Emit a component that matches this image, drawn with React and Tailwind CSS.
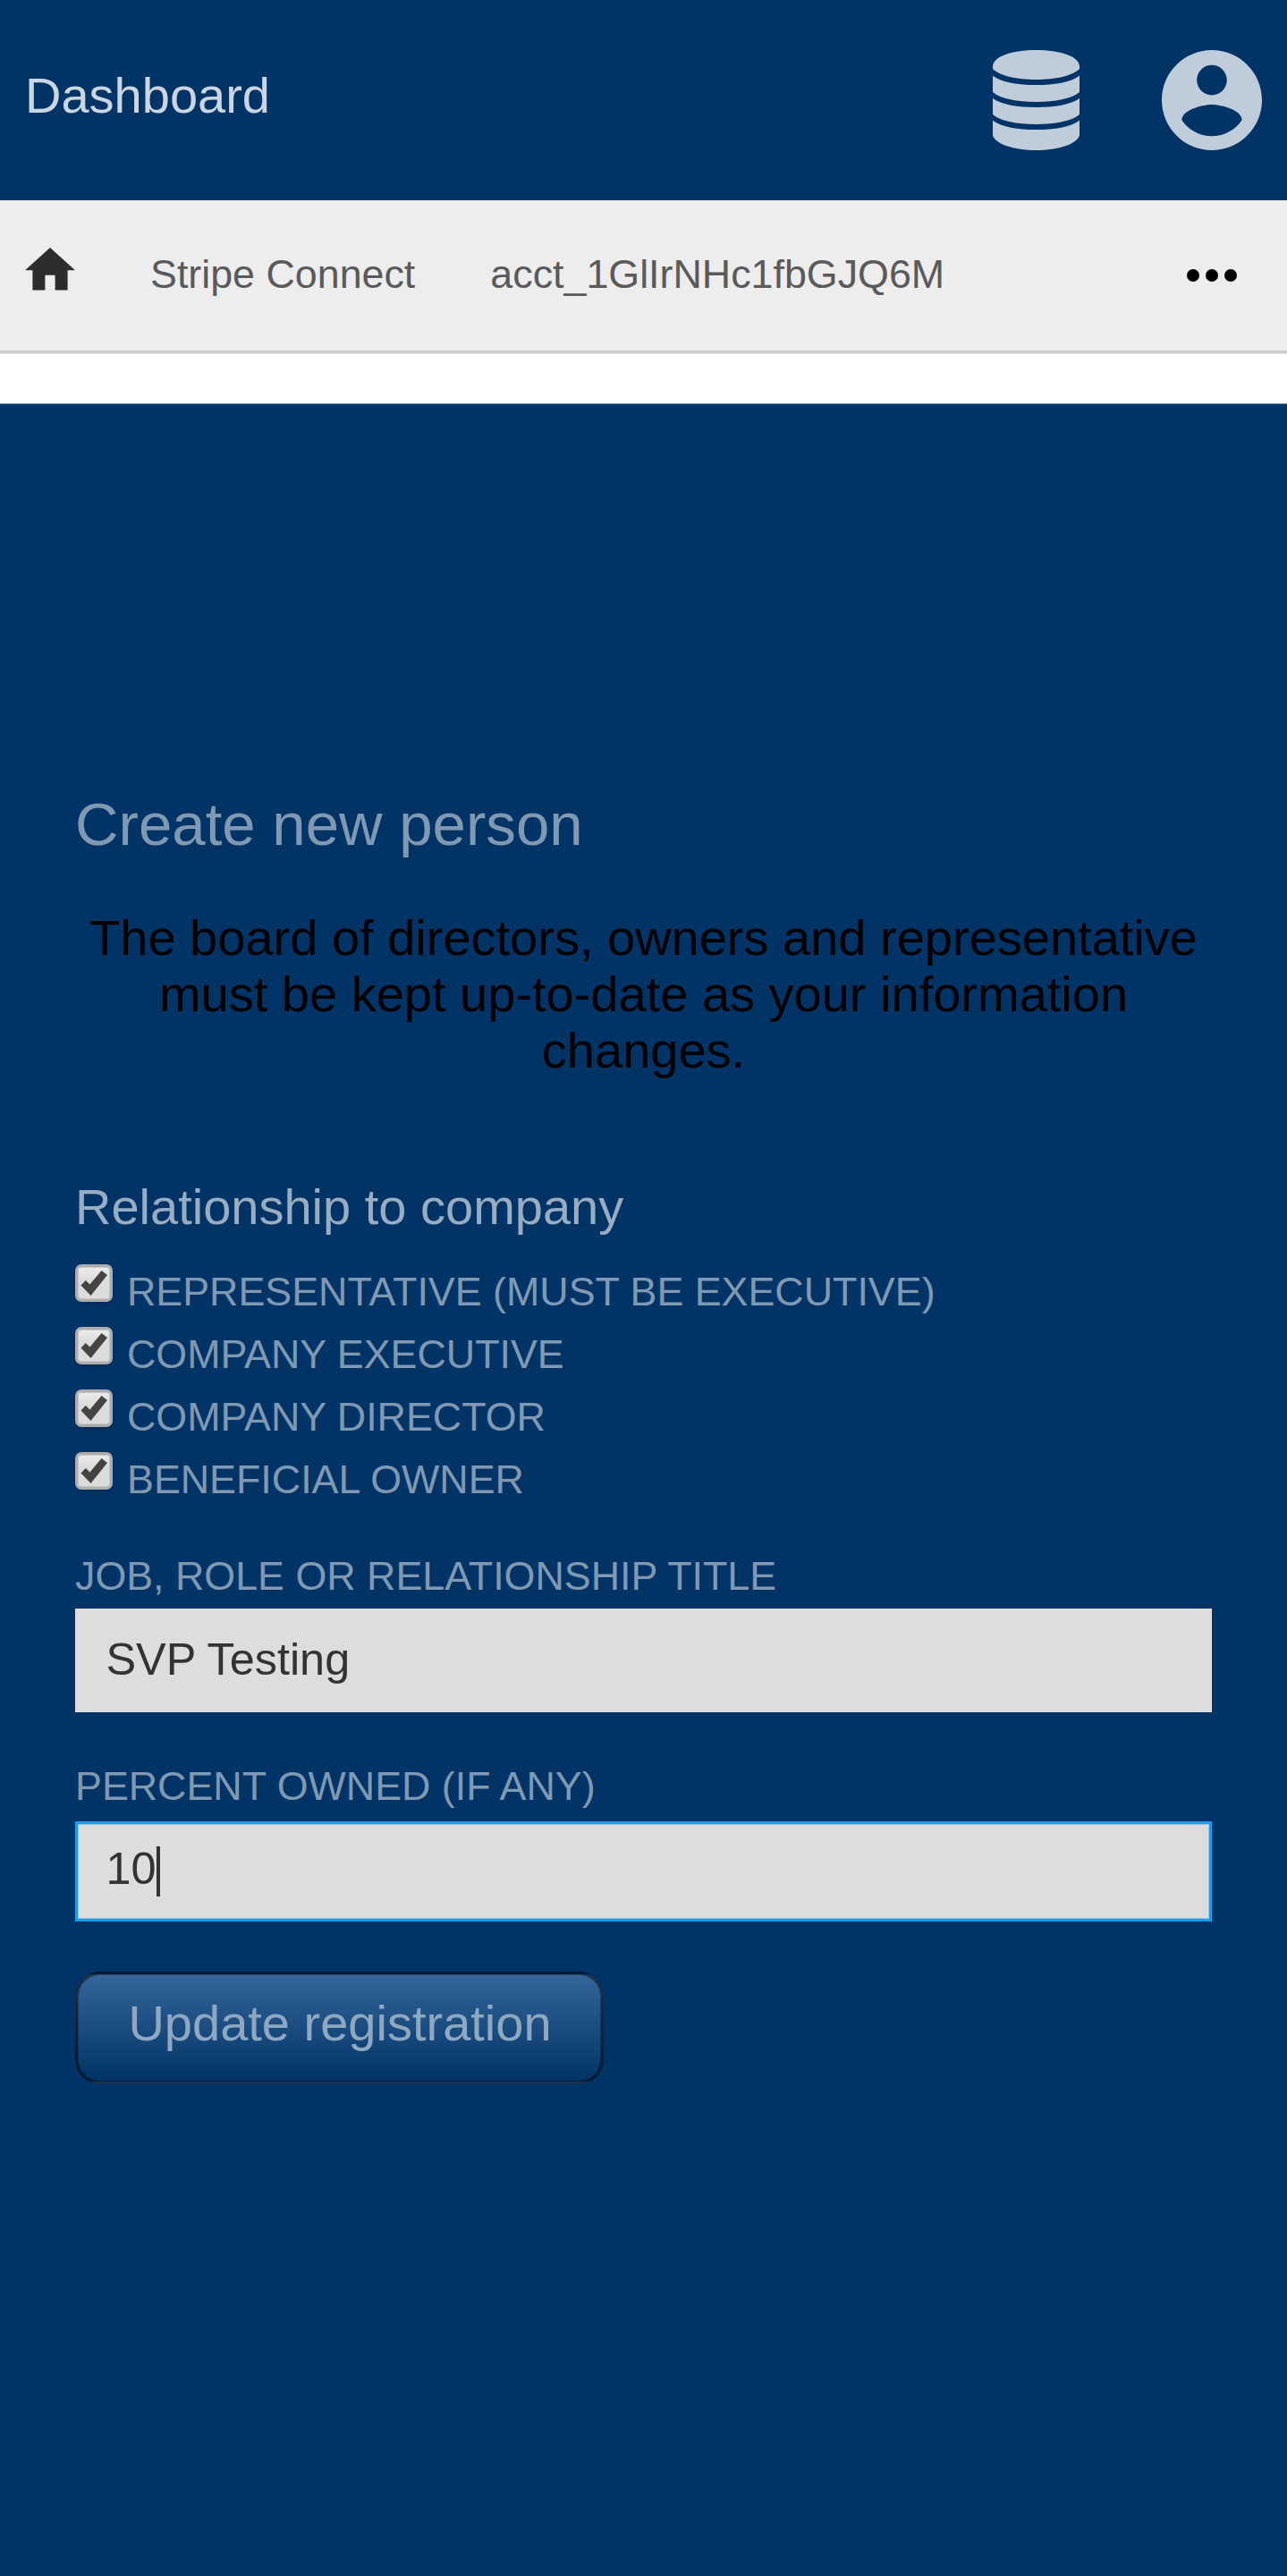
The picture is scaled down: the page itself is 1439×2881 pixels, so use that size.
const relationships = [
  "Representative (must be executive)",
  "Company executive",
  "Company director",
  "Beneficial owner",
];

function DatabaseIcon() {
  return (
    <svg className="block h-28 w-[97px]" viewBox="0 0 97 112" fill="currentColor" aria-hidden="true">
      <path d="M0 18.5C0 7 22 0 48.5 0S97 7 97 18.5V21C89 29 70 33 48.5 33S8 29 0 21Z" />
      <path d="M0 28.7C10 36 28 39 48.5 39S87 36 97 28.7V47C88 54.5 70 58 48.5 58S9 54.5 0 47Z" />
      <path d="M0 54C10 61 28 64 48.5 64S87 61 97 54V72C88 79.5 70 83 48.5 83S9 79.5 0 72Z" />
      <path d="M0 78.7C10 86 28 89 48.5 89S87 86 97 78.7V95.5C94 105 74 112 48.5 112S3 105 0 95.5Z" />
    </svg>
  );
}

function AccountIcon() {
  return (
    <svg className="block size-28" viewBox="2 2 20 20" fill="currentColor" aria-hidden="true">
      <path d="M12 2C6.48 2 2 6.48 2 12s4.48 10 10 10 10-4.48 10-10S17.52 2 12 2zm0 3c1.66 0 3 1.34 3 3s-1.34 3-3 3-3-1.34-3-3 1.34-3 3-3zm0 14.2c-2.5 0-4.71-1.28-6-3.22.03-1.99 4-3.08 6-3.08 1.99 0 5.97 1.09 6 3.08-1.29 1.94-3.5 3.22-6 3.22z" />
    </svg>
  );
}

function Checkbox() {
  return (
    <span className="block size-[42px] shrink-0 rounded-[7px] border-[3px] border-[#adadad] bg-linear-to-b from-[#ececec] to-[#dcdcdc] to-40% shadow-[inset_0_0_0_1px_#c8c8c8,0_3px_3px_rgba(0,0,0,0.12)]">
      <svg className="block size-9" viewBox="3 3 36 36" fill="#444" aria-hidden="true">
        <path d="M6.5 23.5L11.8 18L16.5 22.5L29.5 7L36 12L17.5 35Z" />
      </svg>
    </span>
  );
}

export default function App() {
  return (
    <div className="flex h-[2881px] w-[1439px] flex-col bg-white font-['Liberation_Sans',Arial,sans-serif]">
      <header className="flex h-56 shrink-0 items-center bg-[#003366] pr-7 pl-7 text-[#bfccd9]">
        <h1 className="-mt-2.5 flex-1 text-[56px] leading-[64px] text-[#ccd6e0]">Dashboard</h1>
        <DatabaseIcon />
        <div className="ml-[92px]">
          <AccountIcon />
        </div>
      </header>

      <nav className="flex h-[171px] shrink-0 items-center border-b-[3px] border-[#cbcbcb] bg-[#ededed] pl-7 text-[44.8px] text-[#5a5a5a] shadow-[0_1px_0_#e5e5e5]">
        <svg className="mb-[14px] block h-[47.6px] w-14" viewBox="2 3 20 17" fill="#2d2d2d" aria-hidden="true">
          <path d="M10 20v-6h4v6h5v-8h3L12 3 2 12h3v8z" />
        </svg>
        <span className="mb-1 ml-[84px] leading-[52px]">Stripe Connect</span>
        <span className="mb-1 ml-[84px] flex-1 leading-[52px]">acct_1GlIrNHc1fbGJQ6M</span>
        <svg className="mr-14 block h-[14px] w-14" viewBox="0 0 56 14" aria-hidden="true">
          <circle cx="7" cy="7" r="7" />
          <circle cx="28" cy="7" r="7" />
          <circle cx="49" cy="7" r="7" />
        </svg>
      </nav>

      <main className="mt-[56px] flex-1 border-t border-[#7f98b2] bg-[#003366] px-[84px] pt-[432px]">
        <h2 className="text-[67.2px] leading-[76px] text-[#8099b3]">Create new person</h2>
        <p className="mt-[57px] text-center text-[56px] leading-[63px] text-black">
          The board of directors, owners and representative must be kept up-to-date as your information changes.
        </p>
        <h3 className="mt-[112px] text-[56px] leading-[63px] text-[#99adc2]">Relationship to company</h3>

        <div className="mt-[33px]">
          {relationships.map((label) => (
            <label key={label} className="flex h-[70px] items-start text-[44.8px] text-[#8099b3] uppercase">
              <Checkbox />
              <span className="mt-1 ml-4 leading-[52px]">{label}</span>
            </label>
          ))}
        </div>

        <div className="mt-[42px] text-[44.8px] leading-[52px] text-[#8099b3] uppercase">
          Job, role or relationship title
        </div>
        <div className="mt-[11px] flex h-[116px] items-center bg-[#dddddd] px-[34.5px] pb-[3px] text-[50.4px] text-[#333]">
          SVP Testing
        </div>

        <div className="mt-[56px] text-[44.8px] leading-[52px] text-[#8099b3] uppercase">
          Percent owned (if any)
        </div>
        <div className="mt-[14px] flex h-28 items-center border-[3px] border-[#159fed] bg-[#dddddd] px-[31.5px] text-[50.4px] text-[#333] shadow-[inset_0_0_0_1px_#9cc3df]">
          <span className="mb-[6px]">10</span>
          <span className="h-14 w-[4px] bg-[#333]" />
        </div>

        <button className="mt-14 flex h-[126px] w-[591px] items-center justify-center rounded-[28px] border-[3px] border-black/50 bg-linear-to-b from-[#336699] to-[#003366] pb-[11px] pl-px text-[56px] text-[#8fa8c2] shadow-[inset_0_0_0_1px_rgba(0,0,0,0.25)]">
          Update registration
        </button>
      </main>
    </div>
  );
}
